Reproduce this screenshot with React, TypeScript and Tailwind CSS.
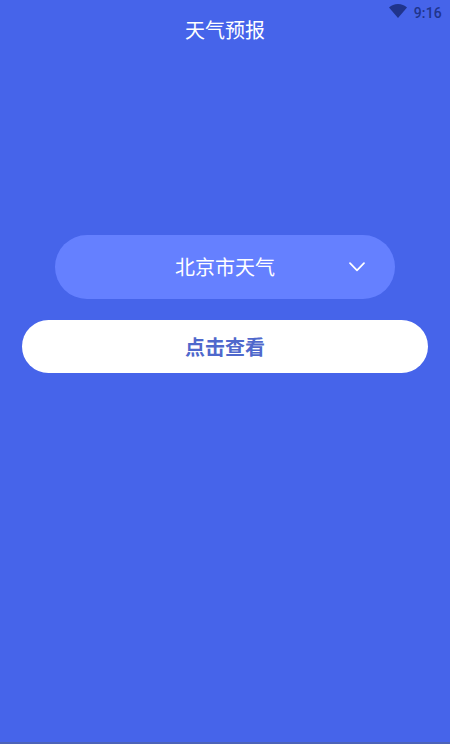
const fontClass = "font-['Roboto','Noto_Sans_CJK_SC',sans-serif]";

export default function App() {
  return (
    <div className={`${fontClass} w-[450px] h-[750px] bg-white overflow-hidden`}>
      <div className="h-[744px] bg-[#4664ea] border-b-2 border-[#4d63b8] flex flex-col">
        {/* Status bar */}
        <div className="h-6 flex items-center justify-end pr-2 pt-0.5 text-[#20348c]">
          <svg width="18" height="14" viewBox="0 0 18 14" className="mr-[7px] mb-[4px]">
            <path d="M0 3.6 C2.4 1.4 5.5 0 9 0 C12.5 0 15.6 1.4 18 3.6 L9 14 Z" fill="currentColor" />
          </svg>
          <span className="text-[14px] font-medium leading-none tracking-[0.2px]">9:16</span>
        </div>

        {/* Title */}
        <div className="h-[14px] flex items-center justify-center">
          <h1 className="text-white text-[20px] font-normal leading-none">天气预报</h1>
        </div>

        {/* City select */}
        <div className="mt-[197px] mx-[55px] h-16 rounded-[32px] bg-[#6580ff] flex items-center pl-[120px] pr-[30px] justify-between">
          <span className="text-white text-[20px] leading-none pt-[2px]">北京市天气</span>
          <svg width="16" height="10" viewBox="0 0 16 10" fill="none" className="mt-[-1px]">
            <path d="M1 1.2 L8 8.4 L15 1.2" stroke="white" strokeWidth="1.7" strokeLinecap="round" strokeLinejoin="round" />
          </svg>
        </div>

        {/* Submit */}
        <button className="mt-[21px] mx-[22px] h-[53px] rounded-[27px] bg-white text-[#4f68cc] text-[20px] font-bold leading-none flex items-center justify-center pt-[2px]">
          点击查看
        </button>
      </div>
    </div>
  );
}
